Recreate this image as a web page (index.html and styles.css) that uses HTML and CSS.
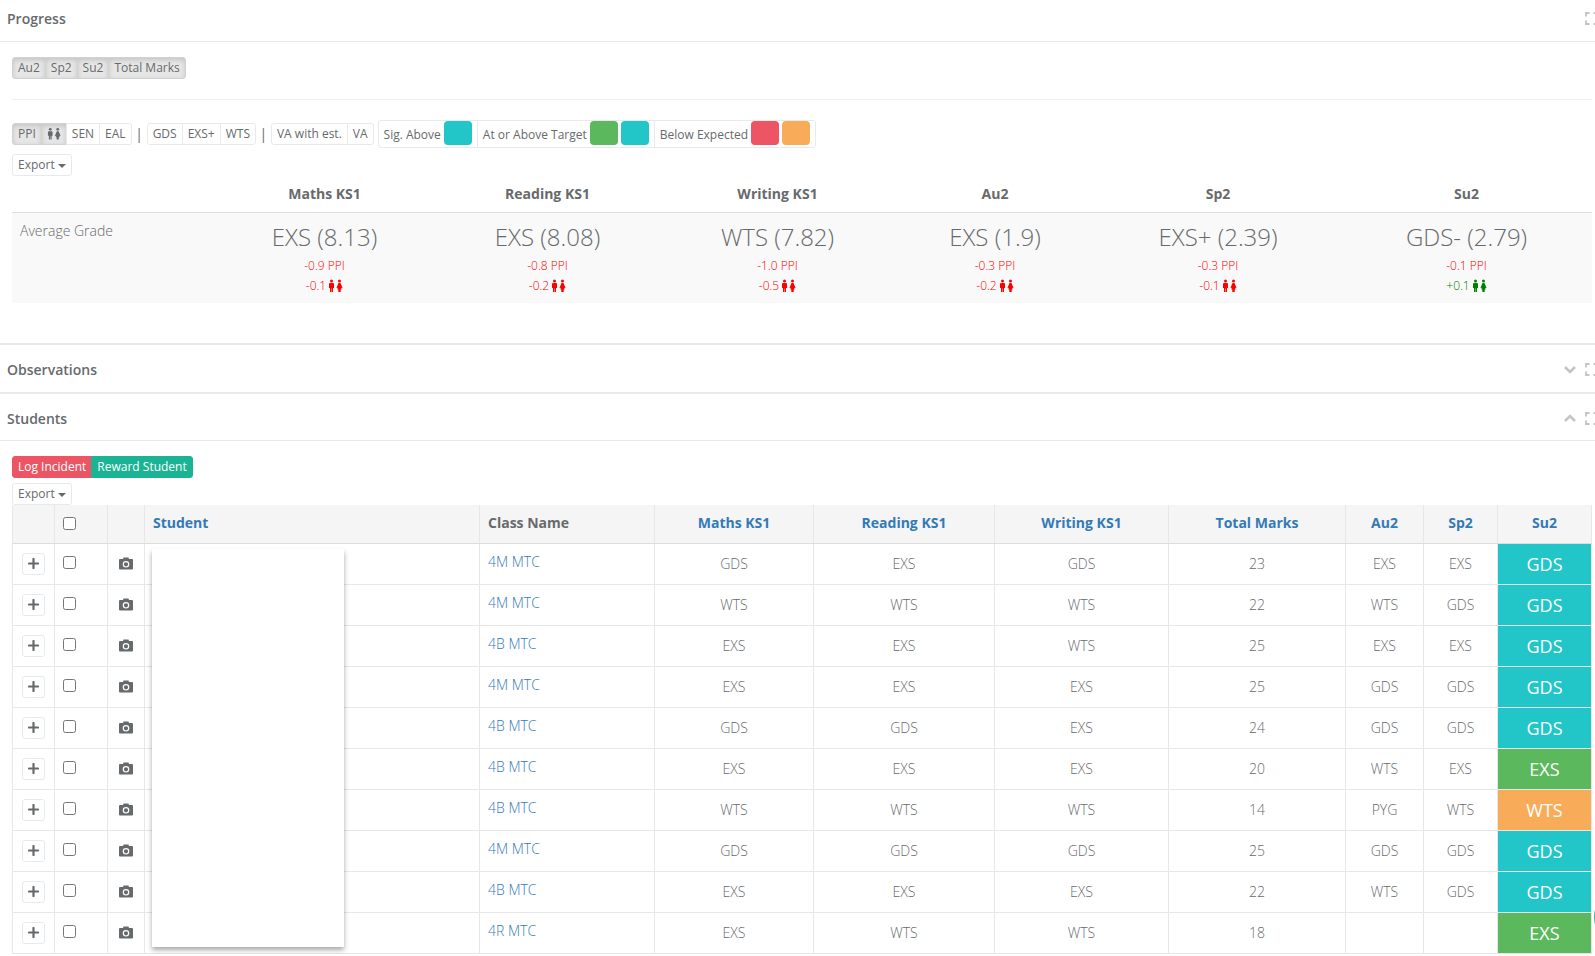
FILE: index.html
```
<!DOCTYPE html>
<html lang="en">
<head>
<meta charset="utf-8">
<title>Class progress</title>
<link rel="stylesheet" href="styles.css">
</head>
<body>
<svg class="sprite" aria-hidden="true">
  <symbol id="people" viewBox="0 0 15 14"><circle cx="3.500" cy="2" r="1.500"/><path d="M1.700 4h3.600l.7.800V9h-1v4H3.700V9.500h-.4V13H2V9H1V4.800z"/><circle cx="11.500" cy="2" r="1.500"/><path d="M10.500 4h2l2 4.800-.8.500-.7-.9.600 2.100h-.9V13h-2.400v-2.500h-.9l.6-2.100-.7.900-.8-.5z"/></symbol>
  <symbol id="camera" viewBox="0 0 14 13"><path fill-rule="evenodd" d="M4.500.500h5l.5 1.500h3a1 1 0 0 1 1 1v8.500a1 1 0 0 1-1 1H1a1 1 0 0 1-1-1V3a1 1 0 0 1 1-1h3zM7 4a3.300 3.300 0 1 0 0 6.600A3.300 3.300 0 1 0 7 4zm0 1.200a2.100 2.100 0 1 1 0 4.200 2.100 2.100 0 0 1 0-4.200z"/></symbol>
  <symbol id="plus" viewBox="0 0 11 11"><path fill="none" stroke="currentColor" stroke-width="2.200" stroke-linecap="round" d="M5.500 1v9M1 5.500h9"/></symbol>
  <symbol id="expand" viewBox="0 0 13 13"><path fill="none" stroke="currentColor" stroke-width="1.800" d="M4.500 1H1v3.500M8.500 1H12v3.500M1 8.500V12h3.500M12 8.500V12H8.500"/></symbol>
  <symbol id="down" viewBox="0 0 12 13"><path fill="none" stroke="currentColor" stroke-width="2.500" d="M1 4l5 5 5-5"/></symbol>
  <symbol id="up" viewBox="0 0 12 13"><path fill="none" stroke="currentColor" stroke-width="2.500" d="M1 9l5-5 5 5"/></symbol>
</svg>

<section class="panel">
  <header class="panel-head">
    <h5>Progress</h5>
    <div class="tools"><button aria-label="Full screen"><svg class="ico-expand"><use href="#expand"/></svg></button></div>
  </header>
  <div class="panel-body">
    <div class="group"><button class="btn on">Au2</button><button class="btn on">Sp2</button><button class="btn on">Su2</button><button class="btn on">Total Marks</button></div>
    <hr>
    <div class="toolbar">
      <div class="group"><button class="btn on">PPI</button><button class="btn on people" aria-label="Gender"><svg class="ico-people"><use href="#people"/></svg></button><button class="btn">SEN</button><button class="btn">EAL</button></div>
      <span class="sep">|</span>
      <div class="group"><button class="btn">GDS</button><button class="btn">EXS+</button><button class="btn">WTS</button></div>
      <span class="sep">|</span>
      <div class="group"><button class="btn">VA with est.</button><button class="btn">VA</button></div>
      <div class="group legend"><button class="btn">Sig. Above <i class="swatch teal"></i></button><button class="btn">At or Above Target <i class="swatch green"></i><i class="swatch teal"></i></button><button class="btn">Below Expected <i class="swatch red"></i><i class="swatch orange"></i></button></div>
    </div>
    <button class="btn export">Export <span class="caret"></span></button>
    <table class="summary">
      <colgroup><col class="s0"><col class="s1"><col class="s2"><col class="s3"><col class="s4"><col class="s5"><col></colgroup>
      <thead><tr><th></th><th>Maths KS1</th><th>Reading KS1</th><th>Writing KS1</th><th>Au2</th><th>Sp2</th><th>Su2</th></tr></thead>
      <tbody><tr id="averages"><td class="label">Average Grade</td></tr></tbody>
    </table>
  </div>
</section>

<section class="panel">
  <header class="panel-head">
    <h5>Observations</h5>
    <div class="tools"><button aria-label="Open"><svg class="ico-chevron"><use href="#down"/></svg></button><button aria-label="Full screen"><svg class="ico-expand"><use href="#expand"/></svg></button></div>
  </header>
</section>

<section class="panel">
  <header class="panel-head">
    <h5>Students</h5>
    <div class="tools"><button aria-label="Close"><svg class="ico-chevron"><use href="#up"/></svg></button><button aria-label="Full screen"><svg class="ico-expand"><use href="#expand"/></svg></button></div>
  </header>
  <div class="panel-body">
    <div class="group"><button class="btn danger">Log Incident</button><button class="btn primary">Reward Student</button></div>
    <button class="btn export low">Export <span class="caret"></span></button>
    <div class="table-wrap">
      <table class="students">
        <colgroup><col class="c-plus"><col class="c-check"><col class="c-photo"><col><col class="c-class"><col class="c-maths"><col class="c-reading"><col class="c-writing"><col class="c-total"><col class="c-au"><col class="c-sp"><col class="c-su"></colgroup>
        <thead><tr><th></th><th><input type="checkbox" aria-label="Select all"></th><th></th><th><a href="#">Student</a></th><th>Class Name</th><th class="num"><a href="#">Maths KS1</a></th><th class="num"><a href="#">Reading KS1</a></th><th class="num"><a href="#">Writing KS1</a></th><th class="num"><a href="#">Total Marks</a></th><th class="num"><a href="#">Au2</a></th><th class="num"><a href="#">Sp2</a></th><th class="num"><a href="#">Su2</a></th></tr></thead>
        <tbody id="rows"></tbody>
      </table>
      <div class="cover"></div>
    </div>
  </div>
</section>
<div class="bubble"></div>
<script src="app.js"></script>
</body>
</html>
```
FILE: styles.css
```
* { box-sizing: border-box; }
html, body { overflow: hidden; }
body { margin: 0; font: 300 14px/20px "Open Sans", sans-serif; color: #676a6c; background: #fff; }
.sprite { display: none; }
svg { fill: currentColor; display: block; }
button { font: inherit; color: inherit; cursor: pointer; }
a { color: #337ab7; text-decoration: none; }

.panel + .panel { border-top: 2px solid #e7eaec; }
.panel-head { display: flex; justify-content: space-between; align-items: center; height: 47px; padding: 3px 0 0 7px; }
.panel:first-of-type .panel-head { height: 41px; padding: 0 0 4px 7px; }
.panel:last-of-type .panel-head { height: 46px; padding-top: 4px; }
.panel h5 { margin: 0; font-size: 14px; font-weight: 600; }
.tools { display: flex; gap: 9px; margin-right: -3px; color: #c4c4c4; }
.tools button { border: 0; padding: 0; background: none; }
.ico-expand { width: 13px; height: 13px; }
.ico-chevron { width: 12px; height: 13px; }
.panel-body { border-top: 1px solid #e7eaec; padding: 15px 3px 40px 12px; }
.panel:last-of-type .panel-body { padding-bottom: 0; }

.group { display: flex; align-items: center; }
.btn { height: 22px; padding: 0 5px; border: 1px solid #e7eaec; border-radius: 3px; background: #fff; font-size: 12px; line-height: 18px; font-weight: 400; white-space: nowrap; }
.group .btn { border-radius: 0; margin-left: -1px; }
.group .btn:first-child { border-radius: 3px 0 0 3px; margin-left: 0; }
.group .btn:last-child { border-radius: 0 3px 3px 0; }
.btn.on { background: #e6e6e6; border-color: #d2d2d2; box-shadow: inset 0 2px 5px rgba(0, 0, 0, .15); }
.btn.danger { background: #ed5565; border-color: #ed5565; color: #fff; }
.btn.primary { background: #1ab394; border-color: #1ab394; color: #fff; }
hr { margin: 20px 0; border: 0; border-top: 1px solid #eee; }
.toolbar { display: flex; align-items: center; }
.sep { width: 15px; text-align: center; font-weight: 400; }
.legend { margin-left: 4px; }
.legend .btn { display: flex; align-items: center; gap: 3px; height: 28px; padding-top: 1px; }
.swatch { width: 28px; height: 24px; border-radius: 4px; margin-top: -3px; }
.teal { background: #23c6c8; }
.green { background: #5cb85c; }
.red { background: #ed5565; }
.orange { background: #f8ac59; }
.export { display: flex; align-items: center; gap: 3px; margin-top: 6px; }
.export.low { margin-top: 5px; }
.caret { border: 4px solid transparent; border-top-color: currentColor; border-bottom: 0; margin-top: 2px; }
.ico-people { width: 15px; height: 14px; }
.btn .ico-people { width: 14px; }

table { width: 100%; border-collapse: collapse; table-layout: fixed; }
th { font-weight: 700; }
.summary th { height: 36px; padding: 0; border-bottom: 1px solid #ddd; }
.summary td { padding: 8px 0 7px; vertical-align: top; text-align: center; background: #f9f9f9; font-size: 12px; }
.summary .label { text-align: left; padding-left: 8px; font-size: 14px; }
.grade { font-size: 24px; line-height: 32px; margin-bottom: 3px; }
.diff { display: flex; justify-content: center; align-items: center; gap: 2px; color: #f00; }
.diff.plus { color: #008000; }
.s0 { width: 202px; } .s1 { width: 221px; } .s2 { width: 225px; } .s3 { width: 235px; } .s4 { width: 200px; } .s5 { width: 246px; }

.table-wrap { position: relative; }
.students th, .students td { border: 1px solid #e7e7e7; padding: 0 8px; text-align: left; }
.students th { height: 39px; padding-bottom: 2px; background: #f5f5f6; border-top: 0; border-bottom-color: #ddd; }
.students td { height: 41px; }
.students .num { text-align: center; }
.students .class a { display: block; padding-bottom: 4px; }
.students .result { font-size: 18px; font-weight: 400; color: #fff; }
.students input { display: block; width: 13px; height: 13px; margin: 2px 0 0; }
.students td input { margin: 0 0 4px; }
.c-plus { width: 42px; } .c-check { width: 53px; } .c-photo { width: 37px; } .c-class { width: 175px; } .c-maths { width: 159px; } .c-reading { width: 181px; } .c-writing { width: 174px; } .c-total { width: 177px; } .c-au { width: 78px; } .c-sp { width: 74px; } .c-su { width: 94px; }
.students .icon-cell { padding: 0 0 1px; }
.add { display: flex; align-items: center; justify-content: center; width: 23px; margin: 0 auto; }
.ico-plus { width: 11px; height: 11px; flex: none; }
.ico-camera { width: 14px; height: 13px; margin: 0 auto; }
.cover { position: absolute; left: 140px; top: 44px; bottom: 7px; width: 192px; background: #fff; box-shadow: 0 3px 5px rgba(0, 0, 0, .35); }
.bubble { position: absolute; right: -59px; top: 887px; width: 60px; height: 60px; border-radius: 50%; background: #1ab394; }
```
FILE: app.js
```
const icon = (id) => `<svg class="ico-${id}"><use href="#${id}"/></svg>`;

const averages = [
  ['EXS (8.13)', '-0.9', '-0.1'], ['EXS (8.08)', '-0.8', '-0.2'], ['WTS (7.82)', '-1.0', '-0.5'],
  ['EXS (1.9)', '-0.3', '-0.2'], ['EXS+ (2.39)', '-0.3', '-0.1'], ['GDS- (2.79)', '-0.1', '+0.1'],
];
document.getElementById('averages').insertAdjacentHTML('beforeend', averages.map(([grade, ppi, gap]) =>
  `<td><div class="grade">${grade}</div><div class="diff">${ppi} PPI</div>` +
  `<div class="diff${gap[0] === '+' ? ' plus' : ''}">${gap}${icon('people')}</div></td>`).join(''));

const students = [
  ['4M MTC', 'GDS', 'EXS', 'GDS', 23, 'EXS', 'EXS', 'GDS'],
  ['4M MTC', 'WTS', 'WTS', 'WTS', 22, 'WTS', 'GDS', 'GDS'],
  ['4B MTC', 'EXS', 'EXS', 'WTS', 25, 'EXS', 'EXS', 'GDS'],
  ['4M MTC', 'EXS', 'EXS', 'EXS', 25, 'GDS', 'GDS', 'GDS'],
  ['4B MTC', 'GDS', 'GDS', 'EXS', 24, 'GDS', 'GDS', 'GDS'],
  ['4B MTC', 'EXS', 'EXS', 'EXS', 20, 'WTS', 'EXS', 'EXS'],
  ['4B MTC', 'WTS', 'WTS', 'WTS', 14, 'PYG', 'WTS', 'WTS'],
  ['4M MTC', 'GDS', 'GDS', 'GDS', 25, 'GDS', 'GDS', 'GDS'],
  ['4B MTC', 'EXS', 'EXS', 'EXS', 22, 'WTS', 'GDS', 'GDS'],
  ['4R MTC', 'EXS', 'WTS', 'WTS', 18, '', '', 'EXS'],
];
const colours = { GDS: 'teal', EXS: 'green', WTS: 'orange' };
document.getElementById('rows').innerHTML = students.map((row, i) => {
  const marks = row.slice(1, 7).map((v) => `<td class="num">${v}</td>`).join('');
  return `<tr><td class="icon-cell"><button class="btn add" aria-label="Show details">${icon('plus')}</button></td>` +
    `<td><input type="checkbox" aria-label="Select student ${i + 1}"></td>` +
    `<td class="icon-cell">${icon('camera')}</td><td></td><td class="class"><a href="#">${row[0]}</a></td>` +
    `${marks}<td class="num result ${colours[row[7]]}">${row[7]}</td></tr>`;
}).join('');
```
